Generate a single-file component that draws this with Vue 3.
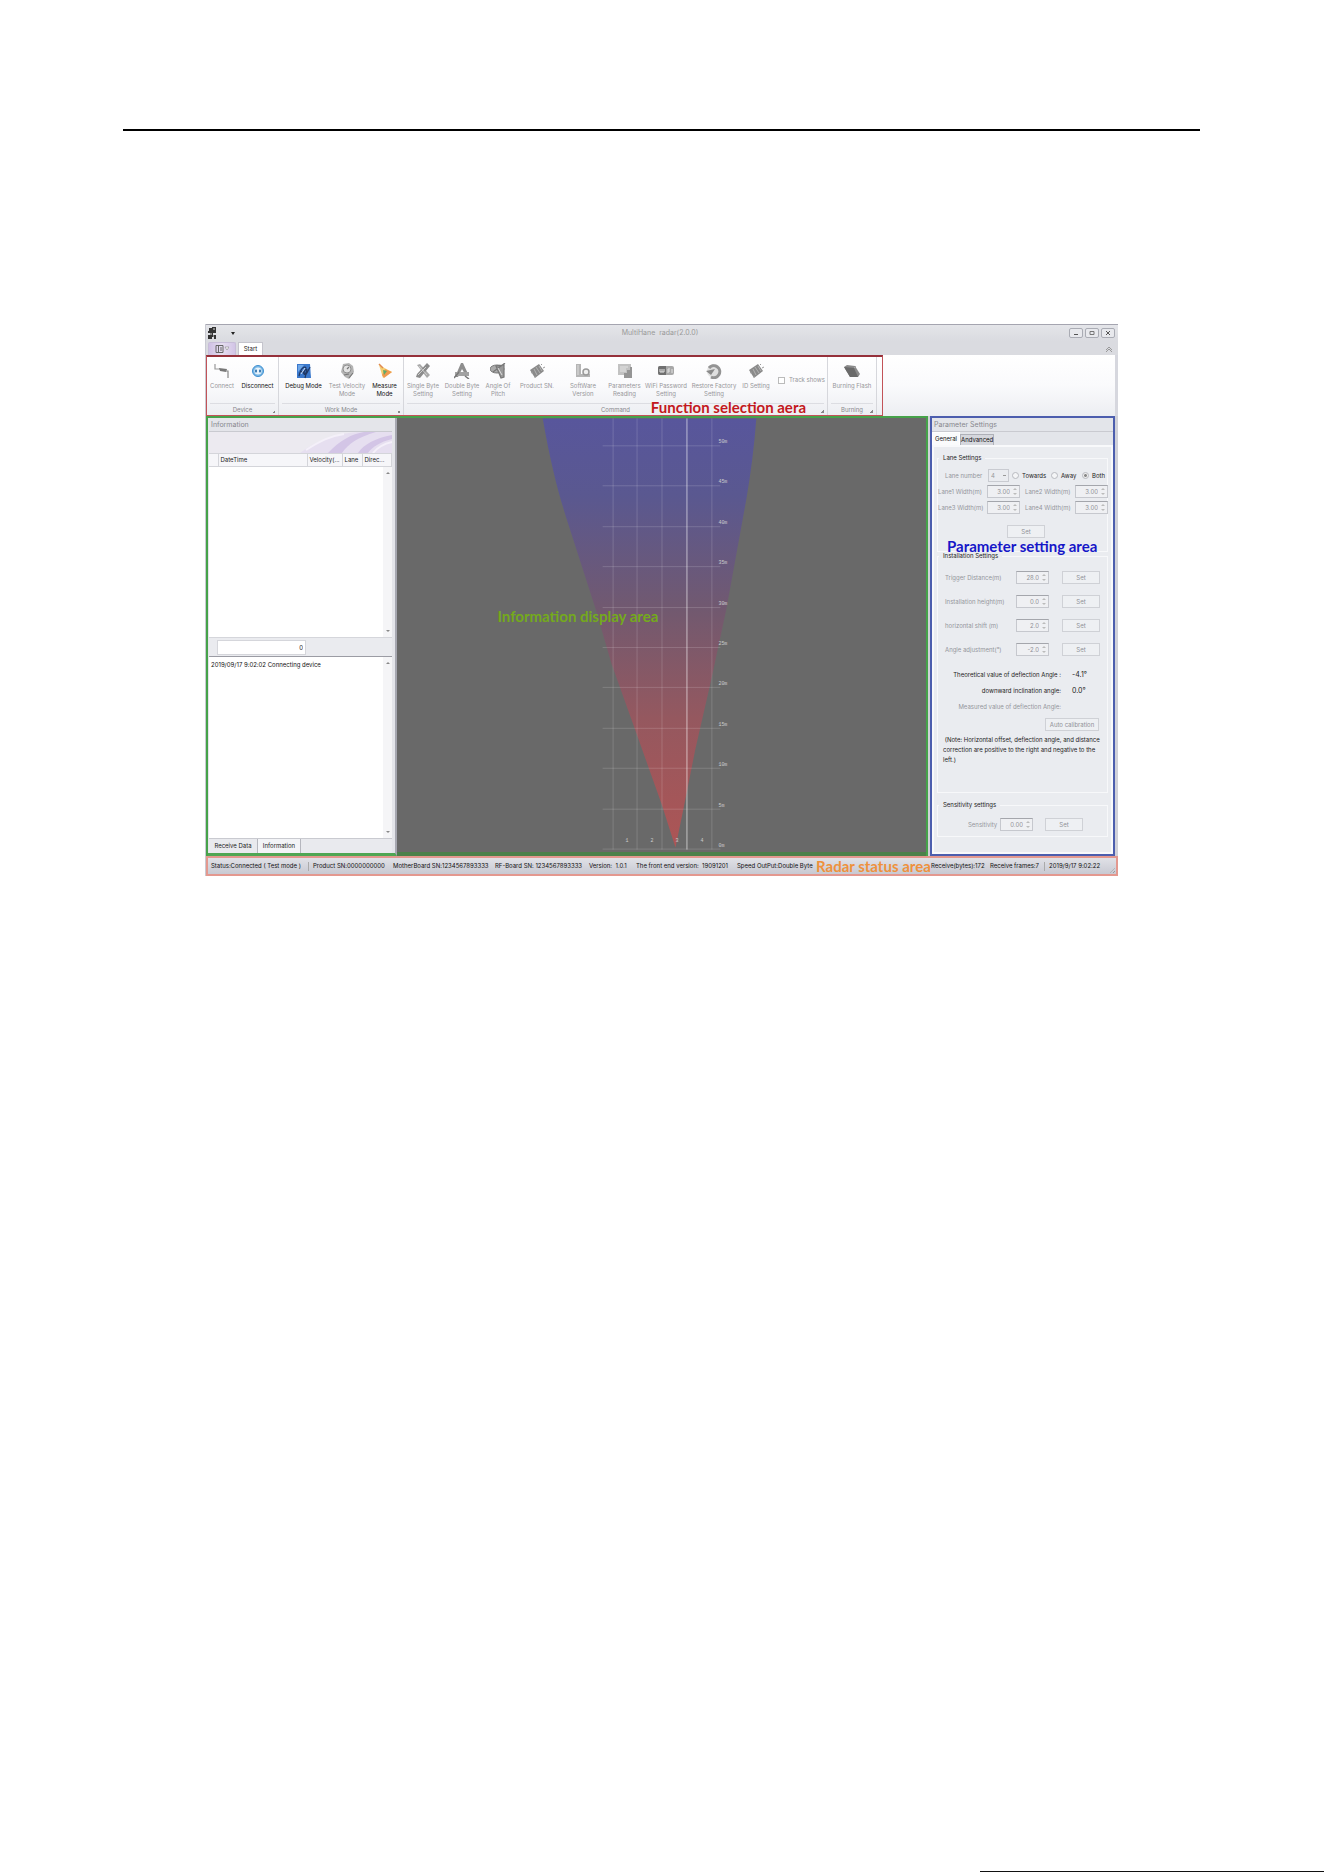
<script setup>
import { ref } from 'vue'

const groups = [
  {
    name: 'Device',
    items: [
      { icon: 'connect', label: 'Connect', width: 30, off: true },
      { icon: 'disconnect', label: 'Disconnect', width: 41 },
    ],
  },
  {
    name: 'Work Mode',
    items: [
      { icon: 'debug', label: 'Debug Mode', width: 49 },
      { icon: 'velocity', label: 'Test Velocity Mode', width: 38, off: true },
      { icon: 'measure', label: 'Measure Mode', width: 37 },
    ],
  },
  {
    name: 'Command',
    items: [
      { icon: 'single', label: 'Single Byte Setting', width: 38, off: true },
      { icon: 'double', label: 'Double Byte Setting', width: 40, off: true },
      { icon: 'angle', label: 'Angle Of Pitch', width: 32, off: true },
      { icon: 'chip', label: 'Product SN.', width: 46, off: true },
      { icon: 'software', label: 'SoftWare Version', width: 46, off: true },
      { icon: 'params', label: 'Parameters Reading', width: 37, off: true },
      { icon: 'wifi', label: 'WiFi Password Setting', width: 46, off: true },
      { icon: 'restore', label: 'Restore Factory Setting', width: 50, off: true },
      { icon: 'chip', label: 'ID Setting', width: 34, off: true },
    ],
    check: 'Track shows',
  },
  {
    name: 'Burning',
    items: [{ icon: 'burn', label: 'Burning Flash', width: 48, off: true }],
  },
]

const icons = {
  connect: '<path d="M1 1v5h5" fill="none" stroke="#999" stroke-width="1.2"/><path d="M5 5l8 1-1 3-6-1z" fill="#777"/><path d="M11 8h3v7" fill="none" stroke="#888" stroke-width="1.2"/>',
  disconnect: '<circle cx="8" cy="8" r="5.5" fill="#7db9e6" stroke="#3d8fd0"/><circle cx="8" cy="8" r="3.6" fill="#e6f3fc"/><path d="M5 8h2M9 8h2M6 6.500v3M10 6.500v3" stroke="#3273ad" stroke-width="1.300"/>',
  debug: '<path d="M1 1h13l1 14H1z" fill="#3a78cc"/><path d="M2 2h6L2 9z" fill="#6ea7e8"/><path d="M3 13C5 4 9 3 10 5S6 9 8 11s4-3 6-7M9 15l2-9M4 8l7 3" fill="none" stroke="#203864" stroke-width="1.200"/><path d="M5 11l4-6" stroke="#cfe0f5"/>',
  velocity: '<path d="M4 1l6-1 4 3 1 6-5 7-4-2-4-5z" fill="#b4b4b4"/><circle cx="8" cy="6" r="4" fill="#e2e2e2" stroke="#909090"/><path d="M8 6l2-2M5 12l5-1M10 15l4-5" stroke="#777" stroke-width="1.200"/>',
  measure: '<path d="M2 2l13 7L6 15z" fill="#f5cf72"/><path d="M8 6l7 3-8 6-2-3z" fill="#ee9a50"/><path d="M6 7l4 1-3 4z" fill="#5cab6c"/><path d="M2 1l4 4" stroke="#e08a50" stroke-width="1.500"/>',
  single: '<path d="M2 2l3-1 10 11-3 3z" fill="#a9a9a9"/><path d="M12 0l3 3L5 15l-4-1 1-3z" fill="#8c8c8c"/><path d="M4 3l8 9M11 4l-8 8" stroke="#cfcfcf"/>',
  double: '<path d="M7 0h2l6 13h-3L8 6l-4 8H1z" fill="#8e8e8e"/><path d="M1 9h14v4H1z" fill="#a2a2a2"/><path d="M0 15l5-6M11 13l4 3" stroke="#777" stroke-width="1.500"/>',
  angle: '<ellipse cx="7" cy="6" rx="7" ry="4" fill="#aaa" stroke="#777"/><path d="M15 0L3 9M6 3l5 12 3-1V2z" fill="#999" stroke="#777" stroke-width="1.200"/><path d="M8 5l4 7" stroke="#ddd"/>',
  chip: '<path d="M1 7l9-6 5 7-9 7z" fill="#8a8a8a"/><path d="M5 6l3 6M7 4l4 6M10 3l3 5" stroke="#bdbdbd" stroke-width=".8"/><path d="M2 10l2-1M5 14l2-1M12 2l1-1M14 5l2-1" stroke="#999"/>',
  software: '<path d="M1 1h5v10h9v3H1z" fill="#b5b5b5"/><circle cx="11" cy="9" r="3" fill="#eee" stroke="#999" stroke-width="1.500"/><path d="M3 2v10" stroke="#ddd"/>',
  params: '<path d="M1 1h13v11H1z" fill="#c2c2c2"/><path d="M3 4h8M3 6h6M3 8h6" stroke="#e4e4e4"/><path d="M7 10h3V7h3V4h2v11H7z" fill="#959595"/>',
  wifi: '<rect x="0" y="3" width="16" height="9" rx="2" fill="#a8a8a8"/><path d="M2 3h6v9H2a2 2 0 0 1-2-2V5a2 2 0 0 1 2-2z" fill="#707070"/><path d="M2 6v3h2V6M4 9h2V6M10 10V6h2M10 8h2M14 6v4" fill="none" stroke="#e3e3e3"/>',
  restore: '<circle cx="8" cy="8" r="7" fill="#e0e0e0"/><path d="M3 5a6 6 0 1 1 2 9" fill="none" stroke="#949494" stroke-width="3"/><path d="M0 8l9-2-4 6z" fill="#8a8a8a"/>',
  burn: '<path d="M0 4l3-2 8 1 5 8-2 3H6z" fill="#8a8a8a"/><path d="M0 4l10 1 4 9H6z" fill="#6a6a6a"/><path d="M10 5l2-2" stroke="#aaa"/>',
}

const distances = [50, 45, 40, 35, 30, 25, 20, 15, 10, 5, 0].map((m, i) => ({ text: m + 'm', y: 27 + Math.round(i * 40.4) }))
const laneLines = [217, 241, 266, 291, 316]

const direction = ref('Both')
const tracks = ref(false)
const lanes = [
  { label: 'Lane1 Width(m)', value: '3.00' },
  { label: 'Lane2 Width(m)', value: '3.00' },
  { label: 'Lane3 Width(m)', value: '3.00' },
  { label: 'Lane4 Width(m)', value: '3.00' },
]
const installs = [
  { label: 'Trigger Distance(m)', value: '28.0' },
  { label: 'Installation height(m)', value: '0.0' },
  { label: 'horizontal shift (m)', value: '2.0' },
  { label: 'Angle adjustment(°)', value: '-2.0' },
]
</script>

<template>
  <div class="page">
    <header class="rule"></header>

    <main class="window">
      <div class="titlebar">
        <svg class="app-icon" viewBox="0 0 8 12"><path d="M1 1h3v3H1zM4 0h4v6H5v2h3v4H6v-2H4v2H0V8h2V6H0V4h4z" fill="#333" /><path d="M5 2h2M2 7h2M5 9h1" stroke="#ddd" /></svg>
        <span class="caret"></span>
        <h1>MultiHane&nbsp; radar(2.0.0)</h1>
        <div class="controls">
          <button aria-label="Minimize"><svg viewBox="0 0 8 8"><path d="M2 5.500h4" stroke="#555" /></svg></button>
          <button aria-label="Maximize"><svg viewBox="0 0 8 8"><path d="M2 2.500h4v3H2z" fill="none" stroke="#777" /></svg></button>
          <button aria-label="Close"><svg viewBox="0 0 8 8"><path d="M2 2l4 4M6 2L2 6" stroke="#555" /></svg></button>
        </div>
      </div>

      <nav class="tabs">
        <button class="app-menu" aria-label="Menu">
          <svg viewBox="0 0 14 8"><path d="M1 .5h7v7H1zM3.500 .5v7M5 3h2M5 5h2" fill="none" stroke="#666" /><path d="M10 2h4l-2 3z" fill="#fff" stroke="#888" stroke-width=".6" /></svg>
        </button>
        <button class="start">Start</button>
        <svg class="collapse" viewBox="0 0 8 8"><path d="M1 5l3-3 3 3M1 7l3-3 3 3" fill="none" stroke="#888" stroke-width=".8" /></svg>
      </nav>

      <div class="ribbon-row">
        <section class="ribbon">
          <div v-for="g in groups" :key="g.name" class="group">
            <div class="tools">
              <button v-for="t in g.items" :key="t.label" class="tool" :disabled="t.off" :style="{ width: t.width + 'px' }">
                <svg viewBox="0 0 16 16" v-html="icons[t.icon]"></svg>
                <span>{{ t.label }}</span>
              </button>
              <label v-if="g.check" class="track"><input v-model="tracks" type="checkbox" disabled />{{ g.check }}</label>
            </div>
            <div class="group-name">{{ g.name }}<i></i></div>
          </div>
          <strong class="callout function">Function selection aera</strong>
        </section>
      </div>

      <div class="work">
        <div class="display">
          <aside class="info">
            <h2>Information</h2>
            <svg class="swoosh" viewBox="0 0 184 21" preserveAspectRatio="xMaxYMid slice">
              <path d="M92 21C108 8 130 1 150 0h34v21z" fill="#e6dff0" />
              <path d="M120 21C132 8 144 2 156 0h12C150 5 140 12 134 21zM150 21c6-9 18-15 34-18v4c-12 3-20 8-24 14z" fill="#d3c5e6" />
              <path d="M98 18C112 9 122 4 136 2M165 21c4-5 10-9 19-11" fill="none" stroke="#f4f0f9" stroke-width="2" />
            </svg>
            <table>
              <thead>
                <tr><th class="mark"></th><th class="when">DateTime</th><th class="vel">Velocity(...</th><th class="lane">Lane</th><th>Direc...</th></tr>
              </thead>
            </table>
            <div class="list"><div class="scroll"><i class="up"></i><i class="down"></i></div></div>
            <div class="total"><input value="0" aria-label="Total" readonly /></div>
            <div class="log"><p>2019/09/17 9:02:02 Connecting device</p><div class="scroll"><i class="up"></i><i class="down"></i></div></div>
            <div class="foot-tabs"><button>Receive Data</button><button class="on">Information</button></div>
          </aside>

          <section class="canvas">
            <svg viewBox="0 0 530 434" preserveAspectRatio="xMidYMid meet">
              <defs>
                <linearGradient id="beam" x1="0" y1="0" x2="0" y2="1">
                  <stop offset="0" stop-color="#58569c" />
                  <stop offset=".18" stop-color="#5a5890" />
                  <stop offset=".45" stop-color="#72596f" />
                  <stop offset=".7" stop-color="#95585f" />
                  <stop offset="1" stop-color="#ad5555" />
                </linearGradient>
              </defs>
              <path d="M146 0C154 46 162 76 171 104L199 191 215 246 240 316 265 386 279 430 287 391 299 331 315 261 330 191 350 81Q357 40 360 0z" fill="url(#beam)" />
              <g class="grid">
                <path v-for="d in distances" :key="d.y" :d="`M206 ${d.y + .5}H324`" />
                <path v-for="x in laneLines" :key="x" :class="{ bright: x === 291 }" :d="`M${x - .5} 0V432`" />
              </g>
              <g class="marks">
                <text v-for="d in distances" :key="d.text" x="322" :y="d.y - 2">{{ d.text }}</text>
                <text v-for="n in 4" :key="n" :x="204 + n * 25" y="424">{{ n }}</text>
              </g>
            </svg>
            <strong class="callout display-area">Information display area</strong>
          </section>
        </div>

        <aside class="settings">
          <h2>Parameter Settings</h2>
          <div class="set-tabs"><button class="on">General</button><button>Andvanced</button></div>
          <form class="panel" @submit.prevent>
            <fieldset class="lane-set">
              <legend>Lane Settings</legend>
              <div class="direction">
                <label for="lane-number" class="dim">Lane number</label>
                <select id="lane-number" disabled><option>4</option></select>
                <label v-for="d in ['Towards', 'Away', 'Both']" :key="d"><input v-model="direction" type="radio" name="direction" :value="d" disabled />{{ d }}</label>
              </div>
              <div class="widths">
                <template v-for="(l, i) in lanes" :key="i">
                  <label :for="'lane' + i" class="dim">{{ l.label }}</label>
                  <span class="spin"><input :id="'lane' + i" :value="l.value" disabled /></span>
                </template>
              </div>
              <button class="set middle" disabled>Set</button>
            </fieldset>

            <fieldset class="install-set">
              <legend>Installation Settings</legend>
              <div class="installs">
                <template v-for="(s, i) in installs" :key="i">
                  <label :for="'inst' + i" class="dim">{{ s.label }}</label>
                  <span class="spin"><input :id="'inst' + i" :value="s.value" disabled /></span>
                  <button class="set" disabled>Set</button>
                </template>
              </div>
              <dl>
                <dt>Theoretical value of deflection Angle :</dt><dd>-4.1°</dd>
                <dt>downward inclination angle:</dt><dd>0.0°</dd>
                <dt class="dim">Measured value of deflection Angle:</dt><dd></dd>
              </dl>
              <button class="set auto" disabled>Auto calibration</button>
              <p>&nbsp;(Note: Horizontal offset, deflection angle, and distance correction are positive to the right and negative to the left.)</p>
            </fieldset>

            <fieldset class="sense-set">
              <legend>Sensitivity settings</legend>
              <div class="sense">
                <label for="sense" class="dim">Sensitivity</label>
                <span class="spin"><input id="sense" value="0.00" disabled /></span>
                <button class="set" disabled>Set</button>
              </div>
            </fieldset>
          </form>
          <strong class="callout parameter">Parameter setting area</strong>
        </aside>
      </div>

      <footer class="status">
        <span class="sep">Status:Connected ( Test mode )</span>
        <span>Product SN:0000000000</span>
        <span>MotherBoard SN:1234567893333</span>
        <span>RF-Board SN: 1234567893333</span>
        <span>Version:&nbsp; 1.0.1</span>
        <span>The front end version:&nbsp; 19091201</span>
        <span>Speed OutPut:Double Byte</span>
        <strong>Radar status area</strong>
        <span>Receive(bytes):172</span>
        <span class="sep">Receive frames:7</span>
        <span>2019/9/17 9:02:22</span>
        <i class="grip"></i>
      </footer>
    </main>

    <div class="page-end"></div>
  </div>
</template>

<style>
body { margin: 0; background: #fff; }
</style>

<style scoped>
* { box-sizing: border-box; }
.page {
  display: flex; flex-direction: column; min-height: 100vh;
  font: 6px/8px Inter, "Noto Sans", sans-serif; color: #222;
}
button, input, select { font: inherit; color: inherit; margin: 0; padding: 0; border: 0; background: none; border-radius: 0; appearance: none; }
h1, h2, p, dl, dd { margin: 0; font: inherit; }
.rule { margin: 129px 124px 0 123px; border-top: 2px solid #000; }
.window { margin: 193px 206px 0 205px; border-left: 1px solid #c9cad2; background: #dcdde2; }
.page-end { margin-top: auto; align-self: flex-end; width: 26%; border-top: 1px solid #111; }

.titlebar { display: flex; align-items: center; height: 17px; padding: 0 3px 0 2px; border-top: 1px solid #a5a5b0; background: linear-gradient(#e4e5e9, #dadbe0); }
.app-icon { width: 8px; height: 12px; }
.caret { margin-left: 15px; border: 2px solid transparent; border-top: 3px solid #222; border-bottom: 0; }
.titlebar h1 { flex: 1; text-align: center; color: #999; margin-left: 16px; font-size: 7px; }
.controls { display: flex; gap: 2px; }
.controls button { width: 14px; height: 10px; border: 1px solid #aaacb4; border-radius: 2px; background: #e8e9ed; display: flex; justify-content: center; }
.controls svg { width: 8px; height: 8px; }

.tabs { display: flex; align-items: flex-end; height: 14px; padding: 0 5px 0 2px; background: #dadbe0; }
.app-menu { width: 28px; height: 13px; margin-right: 2px; border: 1px solid #c7bdd8; border-bottom: 0; border-radius: 2px 2px 0 0; background: linear-gradient(90deg, #cfc0e4, #e6dff0, #d2c4e6); display: flex; align-items: center; justify-content: center; }
.app-menu svg { width: 14px; height: 8px; }
.start { width: 25px; height: 13px; background: #fff; border: 1px solid #c4c4cc; border-bottom: 0; }
.collapse { width: 8px; height: 8px; margin: 0 0 2px auto; }

.ribbon-row { background: linear-gradient(#fff, #fafafc 50%, #eceef2); border-right: 3px solid #d6d7de; }
.ribbon { position: relative; display: flex; width: 677px; height: 61px; border: 1px solid #c25358; border-top: 2px solid #95303a; }
.group { border-right: 1px solid #d6d7dc; }
.tools { display: flex; height: 46px; }
.tool { display: flex; flex-direction: column; align-items: center; padding-top: 6px; gap: 3px; color: #111; flex: none; }
.tool svg { width: 16px; height: 16px; }
.tool span { text-align: center; }
.tool:disabled, .track { color: #96969a; }
.track { display: flex; align-items: center; gap: 4px; width: 54px; padding-left: 5px; white-space: nowrap; }
.track input { width: 7px; height: 7px; border: 1px solid #bbb; background: #fff; flex: none; }
.group-name { position: relative; margin: 0 3px; height: 12px; line-height: 12px; text-align: center; color: #88888e; border-top: 1px solid #dcdde2; }
.group-name i { position: absolute; right: 0; bottom: 2px; width: 3px; height: 3px; background: linear-gradient(135deg, transparent 50%, #888 50%); }

.callout, .status strong { font: bold 15px/16px Lato, "Noto Sans", sans-serif; white-space: nowrap; }
.callout { position: absolute; }
.function { right: 76px; bottom: 0; color: #c31820; }
.display-area { left: 19%; top: 190px; color: #74aa1c; }
.parameter { left: 15px; top: 120px; color: #1616c8; }

.work { display: flex; gap: 2px; padding-right: 3px; background: #d0d1d9; }
.display { flex: 1; display: flex; border: solid #46a24a; border-width: 2px 2px 0; min-width: 0; }
.info { width: 189px; flex: none; display: flex; flex-direction: column; padding: 0 3px 0 1px; background: #e4e5ea; border-right: 2px solid #a6a7b0; border-bottom: 3px solid #4fa653; }
h2 { height: 14px; line-height: 14px; padding-left: 2px; color: #88888e; font-size: 7px; border-bottom: 1px solid #c9cad0; }
.swoosh { width: 100%; height: 21px; background: #eceaf0; }
table { width: 100%; table-layout: fixed; border-collapse: collapse; background: #f6f6f9; }
th { height: 13px; padding: 0 0 0 2px; text-align: left; font-weight: 400; border: 1px solid #d4d5da; border-left: 0; white-space: nowrap; }
.mark { width: 9px; } .when { width: 89px; } .vel { width: 35px; } .lane { width: 20px; }
.list { position: relative; height: 170px; background: #fff; }
.total { height: 20px; padding: 2px 0 2px 8px; border-bottom: 1px solid #9b9ca4; border-top: 1px solid #d5d6db; background: #eaebef; }
.total input { display: block; width: 89px; height: 15px; background: #fff; border: 1px solid #d5d6db; text-align: right; padding-right: 2px; }
.log { position: relative; flex: 1; background: #fff; padding: 4px 2px; color: #111; }
.scroll { position: absolute; inset: 0 0 0 auto; width: 9px; background: #f5f5f7; }
.scroll i { position: absolute; left: 3px; border: 2px solid transparent; }
.up { top: 3px; border-bottom-color: #888 !important; }
.down { bottom: 3px; border-top-color: #888 !important; }
.foot-tabs { display: flex; height: 15px; border-top: 1px solid #c9cad0; background: #e9eaee; }
.foot-tabs button { width: 49px; border-right: 1px solid #b6b7be; }
.foot-tabs .on { width: 43px; background: #f3f4f7; }

.canvas { position: relative; flex: 1; min-width: 0; background: #696969; border-bottom: 4px solid #4b804b; }
.canvas svg { display: block; width: 100%; height: 434px; }
.grid path { stroke: #fff; stroke-opacity: .16; }
.grid .bright { stroke-opacity: .6; }
.marks text { font: 5px "Liberation Mono", monospace; fill: #ccc; text-anchor: start; }

.settings { position: relative; width: 185px; flex: none; border: 2px solid #4c5eae; background: #e3e5ea; }
.set-tabs { display: flex; height: 13px; }
.set-tabs button { width: 34px; margin-top: 2px; background: #d5d7dd; border: 1px solid #aeb0b8; border-bottom: 0; color: #111; }
.set-tabs .on { width: 28px; margin-top: 0; background: #fafbfc; border-color: #fff; }
.panel { height: 409px; padding: 7px 3px 0; border: 2px solid #f8f9fb; background: #eaecf0; display: flex; flex-direction: column; }
fieldset { margin: 0; padding: 0; min-width: 0; border: 1px solid #f7f8fa; }
legend { padding: 0 4px; margin-left: 1px; line-height: 8px; }
.lane-set { height: 98px; }
.install-set { height: 241px; }
.sense-set { height: 36px; margin-top: 8px; }
.dim { color: #94969c; }
label, dt, dd { white-space: nowrap; }
.direction { display: grid; grid-template-columns: 50px 24px 39px 31px 1fr; align-items: center; height: 13px; margin-top: 7px; }
.direction .dim { padding-left: 7px; }
.direction label:not(.dim) { display: flex; align-items: center; gap: 3px; }
.direction select { width: 21px; height: 13px; padding-left: 2px; border: 1px solid #c9cbd1; color: #999; opacity: 1; background: linear-gradient(#999, #999) 14px 5px / 3px 1px no-repeat; }
input[type="radio"] { width: 7px; height: 7px; border: 1px solid #b8bac0; border-radius: 50%; background: #f4f5f7; }
input[type="radio"]:checked { background: radial-gradient(#888 35%, #eee 45%); }
.widths { display: grid; grid-template-columns: 49px 38px 50px 33px; row-gap: 3px; margin-top: 3px; align-items: center; }
.spin { position: relative; display: block; width: 33px; height: 13px; border: 1px solid #c6c8ce; border-top-color: #a4a6ac; background: #eff0f3; }
.spin input { display: block; width: 100%; height: 11px; padding-right: 9px; text-align: right; color: #8f9197; }
.spin::before, .spin::after { content: ""; position: absolute; right: 2px; border: 2px solid transparent; }
.spin::before { top: 0; border-bottom-color: #bbb; }
.spin::after { bottom: 0; border-top-color: #bbb; }
.set { width: 38px; height: 13px; border: 1px solid #cfd1d6; background: #eef0f3; color: #8f9197; }
.middle { display: block; margin: 11px 0 0 69px; }
.installs { display: grid; grid-template-columns: 78px 46px 38px; row-gap: 11px; margin-top: 11px; align-items: center; }
.installs .dim { padding-left: 7px; }
dl { display: grid; grid-template-columns: 123px 1fr; margin-top: 11px; grid-auto-rows: 16px; align-items: center; }
dt { text-align: right; }
dd { padding-left: 11px; font-size: 7px; }
.auto { display: block; width: 54px; margin: 3px 0 0 107px; }
.install-set p { margin: 4px 0 0 5px; line-height: 10px; }
.sense { display: grid; grid-template-columns: 62px 45px 38px; margin-top: 9px; align-items: center; }
.sense .dim { padding-left: 30px; }

.status { display: grid; grid-template-columns: 102px 80px 102px 94px 47px 101px 79px 1fr 59px 59px 67px; align-items: center; height: 20px; padding-left: 3px; position: relative; border: 2px solid #e3988f; background: linear-gradient(#e0e1e7, #c8c9d2); color: #111; white-space: nowrap; }
.sep { display: flex; align-items: center; justify-content: space-between; }
.sep::after { content: ""; height: 9px; border-left: 1px solid #aaa; margin-right: 4px; }
.status strong { color: #ee913c; }
.grip { position: absolute; right: 1px; bottom: 1px; width: 5px; height: 5px; background: repeating-linear-gradient(135deg, transparent 0 1px, #999 1px 2px); clip-path: polygon(100% 0, 100% 100%, 0 100%); }
</style>
